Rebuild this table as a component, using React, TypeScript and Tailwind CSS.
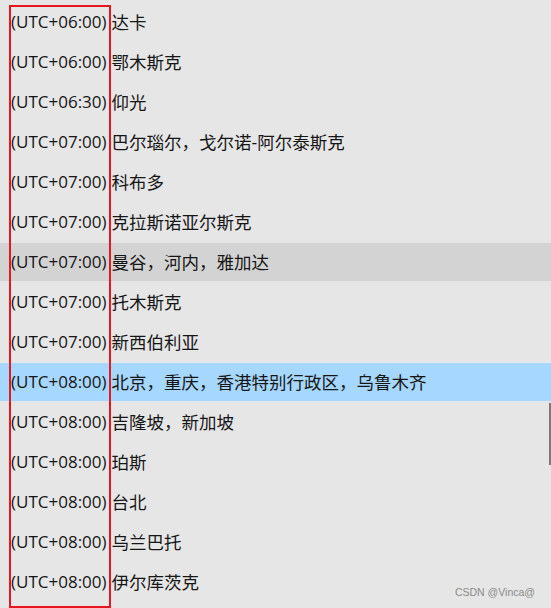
import React from "react";

const rows: [string, string][] = [
  ["(UTC+06:00)", "达卡"],
  ["(UTC+06:00)", "鄂木斯克"],
  ["(UTC+06:30)", "仰光"],
  ["(UTC+07:00)", "巴尔瑙尔，戈尔诺-阿尔泰斯克"],
  ["(UTC+07:00)", "科布多"],
  ["(UTC+07:00)", "克拉斯诺亚尔斯克"],
  ["(UTC+07:00)", "曼谷，河内，雅加达"],
  ["(UTC+07:00)", "托木斯克"],
  ["(UTC+07:00)", "新西伯利亚"],
  ["(UTC+08:00)", "北京，重庆，香港特别行政区，乌鲁木齐"],
  ["(UTC+08:00)", "吉隆坡，新加坡"],
  ["(UTC+08:00)", "珀斯"],
  ["(UTC+08:00)", "台北"],
  ["(UTC+08:00)", "乌兰巴托"],
  ["(UTC+08:00)", "伊尔库茨克"],
];

export default function App() {
  return (
    <div
      className="relative w-[551px] h-[608px] overflow-hidden bg-[#e6e6e6] text-[#161616]"
      style={{ fontFamily: '"Open Sans", "Noto Sans CJK SC", sans-serif' }}
    >
      <div className="flex flex-col pt-px">
        {rows.map(([tz, name], i) => (
          <div
            key={i}
            className={
              "mt-[2px] h-[38px] flex items-center pl-[11px] whitespace-nowrap " +
              (i === 6 ? "bg-[#d3d3d3]" : i === 9 ? "bg-[#a6d7ff]" : "")
            }
          >
            <span className="text-[17px]">{tz}</span>
            <span className="ml-[5px] text-[17.5px]">{name}</span>
          </div>
        ))}
      </div>
      <div className="absolute left-[9px] top-[5px] w-[102px] h-[603px] border-2 border-[#e8161e]" />
      <div className="absolute right-0 top-[403px] w-[2px] h-[62px] bg-[#7a7a7a]" />
      <div
        className="absolute right-[16px] bottom-[7px] text-[10.5px] text-[#8a8a8a]"
        style={{ fontFamily: '"Liberation Sans", sans-serif' }}
      >
        CSDN @Vinca@
      </div>
    </div>
  );
}
